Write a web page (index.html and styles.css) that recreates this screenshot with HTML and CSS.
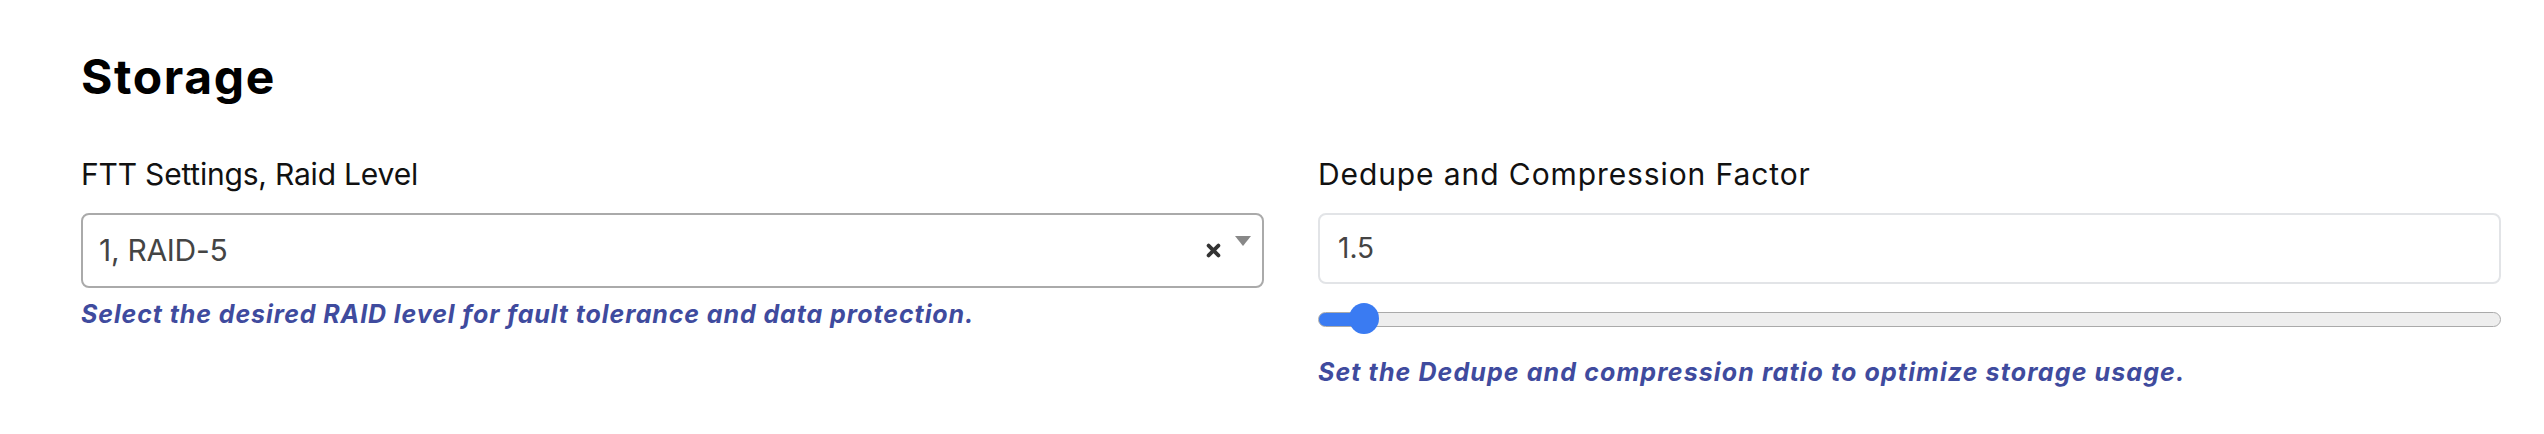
FILE: index.html
```html
<!DOCTYPE html>
<html lang="en">
<head>
<meta charset="utf-8">
<title>Storage</title>
<link rel="stylesheet" href="styles.css">
</head>
<body>
<section class="page">
  <h2 class="title">Storage</h2>
  <div class="grid">
    <div class="field">
      <label class="label">FTT Settings, Raid Level</label>
      <div class="select">
        <span class="select-value">1, RAID-5</span>
        <span class="select-clear" aria-label="Clear">
          <svg width="15" height="15" viewBox="0 0 15 15"><path d="M2.6 2.6 L12.4 12.4 M12.4 2.6 L2.6 12.4" stroke="#333" stroke-width="3.8" stroke-linecap="round"/></svg>
        </span>
        <span class="select-arrow">
          <svg width="16" height="10" viewBox="0 0 16 10"><path d="M0 0 H16 L8 10 Z" fill="#888"/></svg>
        </span>
      </div>
      <p class="help">Select the desired RAID level for fault tolerance and data protection.</p>
    </div>
    <div class="field">
      <label class="label label-wide">Dedupe and Compression Factor</label>
      <div class="input">1.5</div>
      <input class="range" type="range" min="1" max="20" step="0.1" value="1.5" style="--fill:3.8%">
      <p class="help help-right">Set the Dedupe and compression ratio to optimize storage usage.</p>
    </div>
  </div>
</section>
</body>
</html>
```

FILE: styles.css
```css
html, body {
  margin: 0;
  padding: 0;
  background: #ffffff;
}

body {
  font-family: "Inter", "Open Sans", "DejaVu Sans", sans-serif;
  color: #111;
}

.page {
  padding: 48px 43px 0 81px;
}

.title {
  margin: 0 0 46px;
  font-size: 48px;
  line-height: 1.2;
  font-weight: 700;
  color: #000;
  letter-spacing: 1.6px;
}

.grid {
  display: grid;
  grid-template-columns: 1fr 1fr;
  column-gap: 54px;
  align-items: start;
}

.field {
  display: flex;
  flex-direction: column;
}

.label {
  display: block;
  font-size: 30px;
  line-height: 45px;
  font-weight: 400;
  color: #111;
  margin-bottom: 16px;
  letter-spacing: -0.2px;
}

.label-wide {
  letter-spacing: 0.9px;
}

.select {
  box-sizing: border-box;
  height: 75px;
  border: 2px solid #aaaaaa;
  border-radius: 8px;
  display: flex;
  align-items: center;
  padding: 0 11px 0 16px;
}

.select-value {
  flex: 1;
  font-size: 30px;
  color: #444;
  letter-spacing: -0.3px;
}

.select-clear {
  display: flex;
  margin-right: 14px;
}

.select-arrow {
  display: flex;
  align-self: flex-start;
  margin-top: 21px;
}

.input {
  box-sizing: border-box;
  height: 71px;
  border: 2px solid #e2e4e7;
  border-radius: 8px;
  display: flex;
  align-items: center;
  padding: 0 18px;
  font-size: 28px;
  color: #444;
}

.range {
  -webkit-appearance: none;
  appearance: none;
  display: block;
  width: 100%;
  height: 31px;
  margin: 20px 0 0;
  padding: 0;
  background: transparent;
}

.range::-webkit-slider-runnable-track {
  height: 15px;
  box-sizing: border-box;
  border: 1.5px solid #aaaaaa;
  border-radius: 8px;
  background: linear-gradient(to right, #3a7bf2 0 var(--fill), #eeeeee var(--fill) 100%);
}

.range::-webkit-slider-thumb {
  -webkit-appearance: none;
  appearance: none;
  width: 30px;
  height: 31px;
  border-radius: 50%;
  background: #3a7bf2;
  border: none;
  margin-top: -9.5px;
}

.help {
  margin: 8px 0 0;
  font-size: 25px;
  line-height: 36px;
  font-weight: 700;
  font-style: italic;
  letter-spacing: 0.9px;
  color: #3f4b9e;
}

.help-right {
  margin-top: 19px;
  letter-spacing: 1.1px;
}
```
